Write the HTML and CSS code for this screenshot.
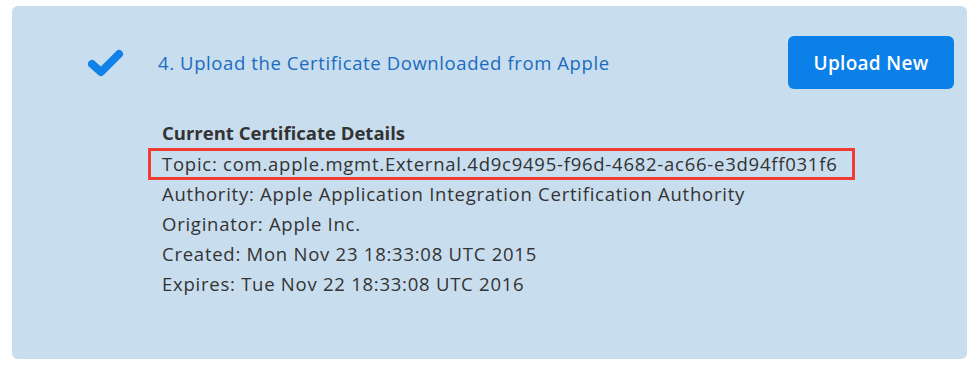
FILE: index.html
```html
<!DOCTYPE html>
<html lang="en">
<head>
    <meta charset="UTF-8">
    <title>APNs Certificate</title>
    <link rel="stylesheet" href="styles.css">
</head>
<body>
    <div class="step-panel">
        <div class="step-header">
            <svg class="check" width="36" height="28" viewBox="0 0 36 28">
                <path d="M4 15 L13 23 L31 5" fill="none" stroke="#1081e8" stroke-width="8" stroke-linecap="round" stroke-linejoin="round"/>
            </svg>
            <div class="step-title">4. Upload the Certificate Downloaded from Apple</div>
            <button class="upload-button">Upload New</button>
        </div>

        <div class="cert-details">
            <div class="cert-heading">Current Certificate Details</div>
            <div class="cert-line highlight">Topic: com.apple.mgmt.External.4d9c9495-f96d-4682-ac66-e3d94ff031f6</div>
            <div class="cert-line">Authority: Apple Application Integration Certification Authority</div>
            <div class="cert-line">Originator: Apple Inc.</div>
            <div class="cert-line">Created: Mon Nov 23 18:33:08 UTC 2015</div>
            <div class="cert-line">Expires: Tue Nov 22 18:33:08 UTC 2016</div>
        </div>
    </div>
</body>
</html>
```

FILE: styles.css
```css
:root {
    --panel-bg: #c8ddee;
    --title-color: #1a6cc0;
    --button-bg: #0a80e8;
    --text-color: #333333;
    --highlight: #f03a32;
}

body {
    margin: 0;
    background-color: #ffffff;
    font-family: "Open Sans", "Liberation Sans", sans-serif;
    color: var(--text-color);
}

.step-panel {
    margin: 6px 0 0 12px;
    width: 955px;
    height: 353px;
    box-sizing: border-box;
    background-color: var(--panel-bg);
    border-radius: 6px;
    padding: 30px 13px 0 0;
}

.step-header {
    display: flex;
    align-items: center;
    height: 53px;
}

.check {
    margin-left: 76px;
    margin-top: 1px;
}

.step-title {
    margin-left: 34px;
    margin-bottom: 1px;
    font-size: 18.5px;
    letter-spacing: 0.6px;
    color: var(--title-color);
    flex: 1;
}

.upload-button {
    width: 166px;
    height: 53px;
    border: none;
    border-radius: 6px;
    background-color: var(--button-bg);
    color: #ffffff;
    font-family: inherit;
    font-size: 19px;
    font-weight: 600;
    letter-spacing: 0.3px;
    cursor: pointer;
}

.cert-details {
    margin: 29px 0 0 150px;
    font-size: 18.5px;
    line-height: 30px;
    letter-spacing: 0.75px;
}

.cert-heading {
    font-weight: 700;
    letter-spacing: 0;
}

.cert-line.highlight {
    display: inline-block;
    line-height: 26px;
    border: 3px solid var(--highlight);
    padding: 0 14px 0 11px;
    margin: 0 0 -2px -14px;
}
```
